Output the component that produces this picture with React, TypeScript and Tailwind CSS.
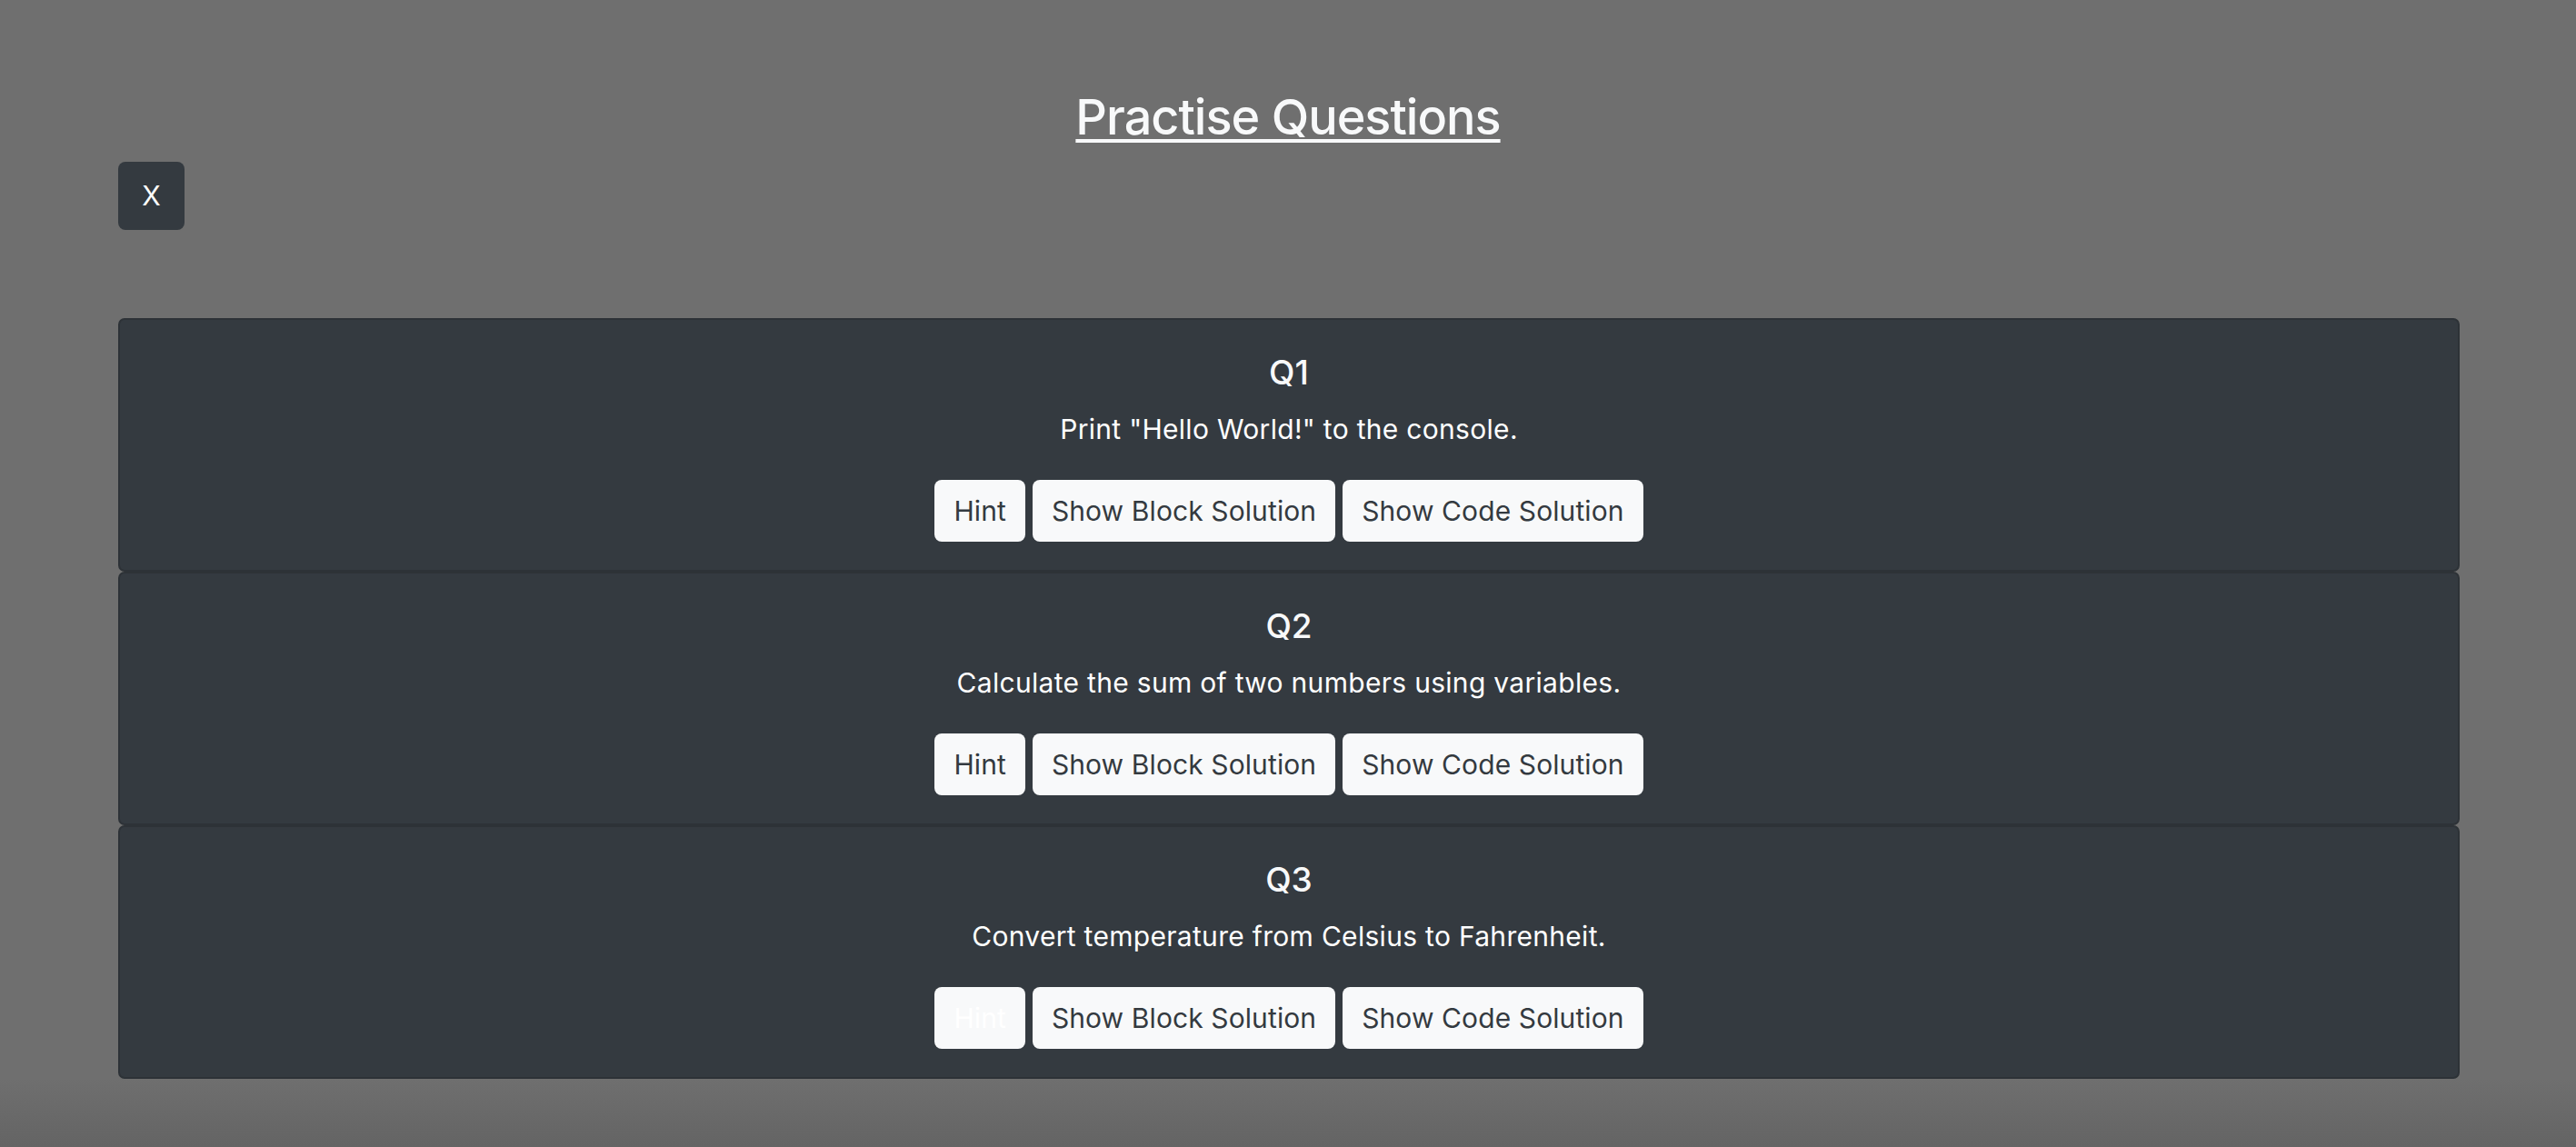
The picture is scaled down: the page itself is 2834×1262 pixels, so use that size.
const questions = [
  { id: "Q1", text: 'Print "Hello World!" to the console.', hintActive: false },
  { id: "Q2", text: "Calculate the sum of two numbers using variables.", hintActive: false },
  { id: "Q3", text: "Convert temperature from Celsius to Fahrenheit.", hintActive: true },
];

function QuestionCard({ id, text, hintActive }: { id: string; text: string; hintActive: boolean }) {
  return (
    <div className="rounded-[7px] border-2 border-[#2d3237] bg-[#343a40] pt-[36px] pb-[31px] text-center">
      <h5 className="mb-[20px] text-[37px] leading-[43px] font-medium text-[#f8f9fa]">{id}</h5>
      <p className="mb-[34px] text-[30px] leading-[43px] tracking-[0.3px] text-white">{text}</p>
      <div className="flex justify-center gap-2">
        <button
          className={`h-[68px] rounded-[8px] bg-[#f8f9fa] px-[21px] text-[30px] leading-[43px] tracking-[0.1px] ${
            hintActive ? "text-white" : "text-[#343a40]"
          }`}
        >
          Hint
        </button>
        <button className="h-[68px] rounded-[8px] bg-[#f8f9fa] px-[21px] text-[30px] leading-[43px] tracking-[0.1px] text-[#343a40]">
          Show Block Solution
        </button>
        <button className="h-[68px] rounded-[8px] bg-[#f8f9fa] px-[21px] text-[30px] leading-[43px] tracking-[0.1px] text-[#343a40]">
          Show Code Solution
        </button>
      </div>
    </div>
  );
}

export default function App() {
  return (
    <div className="min-h-[1262px] bg-[linear-gradient(to_bottom,#6f6f6f_0%,#6f6f6f_94%,#646464_100%)] font-['Inter',sans-serif]">
      <h2 className="pt-[96px] text-center text-[54px] leading-[65px] font-medium tracking-[-1px] text-[#f8f9fa]">
        <span className="underline decoration-[4px] underline-offset-[5px]">Practise Questions</span>
      </h2>

      <div className="pl-[130px] pr-[128px]">
        <button className="mt-[17px] flex h-[75px] w-[73px] items-center justify-center rounded-[8px] bg-[#343a40] text-[30px] text-white">
          X
        </button>

        <div className="mt-[97px] flex flex-col">
          {questions.map((q) => (
            <QuestionCard key={q.id} {...q} />
          ))}
        </div>
      </div>
    </div>
  );
}
